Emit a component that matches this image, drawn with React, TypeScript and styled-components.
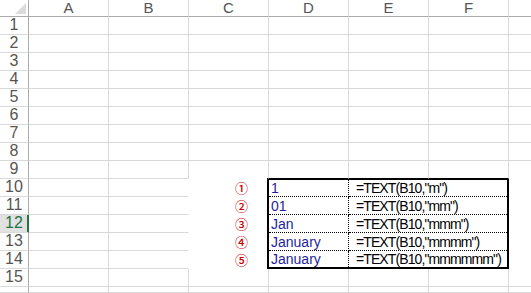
import React from 'react';
import styled, { createGlobalStyle } from 'styled-components';

const GlobalStyle = createGlobalStyle`
  *, *::before, *::after { box-sizing: border-box; }
  html, body { margin: 0; padding: 0; background: #ffffff; overflow: hidden; }
  body { font-family: "Liberation Sans", Arial, sans-serif; }
`;

const GRID = '#d9d9d9';
const HEADER_LINE = '#ababab';
const GREEN = '#217346';

const Sheet = styled.div`
  display: grid;
  grid-template-columns: 29px repeat(6, 80px) 40px;
  grid-template-rows: 17px repeat(15, 18px) 1fr;
  width: 531px;
  height: 293px;
  overflow: hidden;
  background: #ffffff;
`;

const Corner = styled.div`
  position: relative;
  border-right: 1px solid ${HEADER_LINE};
  border-bottom: 1px solid ${HEADER_LINE};
  &::after {
    content: '';
    position: absolute;
    right: 2px;
    bottom: 2px;
    width: 0;
    height: 0;
    border-left: 11px solid transparent;
    border-bottom: 11px solid #dcdcdc;
  }
`;

const ColHeader = styled.div`
  display: flex;
  align-items: flex-end;
  justify-content: center;
  padding-bottom: 1px;
  border-right: 1px solid ${GRID};
  border-bottom: 1px solid ${HEADER_LINE};
  color: #555555;
  font-size: 15px;
  line-height: 15px;
`;

const RowHeader = styled.div<{ $selected?: boolean }>`
  display: flex;
  align-items: flex-end;
  justify-content: center;
  padding-bottom: 1px;
  border-right: 1px solid ${(p) => (p.$selected ? GREEN : HEADER_LINE)};
  border-bottom: 1px solid ${GRID};
  box-shadow: ${(p) => (p.$selected ? `inset -1px 0 0 ${GREEN}` : 'none')};
  background: ${(p) => (p.$selected ? '#e1e1e1' : '#ffffff')};
  color: ${(p) => (p.$selected ? GREEN : '#555555')};
  font-size: 16px;
  line-height: 16px;
`;

const Cell = styled.div<{ $noRight?: boolean; $noBottom?: boolean }>`
  display: flex;
  align-items: center;
  justify-content: flex-end;
  padding-right: 20px;
  border-right: 1px solid ${(p) => (p.$noRight ? 'transparent' : GRID)};
  border-bottom: 1px solid ${(p) => (p.$noBottom ? 'transparent' : GRID)};
`;

const Mark = styled.span`
  font-family: "Noto Sans CJK JP", sans-serif;
  font-size: 13px;
  line-height: 13px;
  font-weight: 500;
  color: #cc0000;
`;

const Table = styled.div`
  grid-column: 5 / 8;
  grid-row: 11 / 16;
  margin: -1px 0 0 -2px;
  border: 2px solid #000000;
  display: grid;
  grid-template-columns: 80px 1fr;
  grid-template-rows: 17px 18px 18px 18px 1fr;
  background: #ffffff;
`;

const ValueCell = styled.div<{ $last?: boolean }>`
  display: flex;
  align-items: flex-end;
  padding: 0 0 0 2px;
  border-right: 1px dotted #000000;
  border-bottom: ${(p) => (p.$last ? 'none' : '1px dotted #000000')};
  color: #1f1f9e;
  font-size: 14px;
  line-height: 15px;
  white-space: nowrap;
`;

const FormulaCell = styled.div<{ $last?: boolean }>`
  display: flex;
  align-items: flex-end;
  padding: 0 0 0 7px;
  border-bottom: ${(p) => (p.$last ? 'none' : '1px dotted #000000')};
  color: #000000;
  font-size: 14px;
  line-height: 15px;
  letter-spacing: -0.9px;
  white-space: nowrap;
`;

const columns = ['A', 'B', 'C', 'D', 'E', 'F', ''];

const entries = [
  { mark: '①', value: '1', formula: '=TEXT(B10,"m")' },
  { mark: '②', value: '01', formula: '=TEXT(B10,"mm")' },
  { mark: '③', value: 'Jan', formula: '=TEXT(B10,"mmm")' },
  { mark: '④', value: 'January', formula: '=TEXT(B10,"mmmm")' },
  { mark: '⑤', value: 'January', formula: '=TEXT(B10,"mmmmmm")' },
];

const ROWS = 16;
const isFilled = (r: number, c: number) => r >= 10 && r <= 14 && c >= 2;
const isTable = (r: number, c: number) => r >= 10 && r <= 14 && c >= 3 && c <= 5;

export default function App() {
  const cells: React.ReactNode[] = [];
  for (let r = 1; r <= ROWS; r++) {
    cells.push(
      <RowHeader key={`h${r}`} $selected={r === 12}>
        {r <= 15 ? r : ''}
      </RowHeader>
    );
    for (let c = 0; c < columns.length; c++) {
      if (isTable(r, c)) continue;
      const mark = c === 2 && r >= 10 && r <= 14 ? entries[r - 10].mark : null;
      cells.push(
        <Cell
          key={`c${r}-${c}`}
          $noRight={isFilled(r, c) || isFilled(r, c + 1)}
          $noBottom={isFilled(r, c) || isFilled(r + 1, c)}
        >
          {mark && <Mark>{mark}</Mark>}
        </Cell>
      );
    }
  }

  return (
    <>
      <GlobalStyle />
      <Sheet>
        <Corner />
        {columns.map((c, i) => (
          <ColHeader key={`col${i}`}>{c}</ColHeader>
        ))}
        <Table>
          {entries.map((e, i) => (
            <React.Fragment key={i}>
              <ValueCell $last={i === entries.length - 1}>{e.value}</ValueCell>
              <FormulaCell $last={i === entries.length - 1}>{e.formula}</FormulaCell>
            </React.Fragment>
          ))}
        </Table>
        {cells}
      </Sheet>
    </>
  );
}
